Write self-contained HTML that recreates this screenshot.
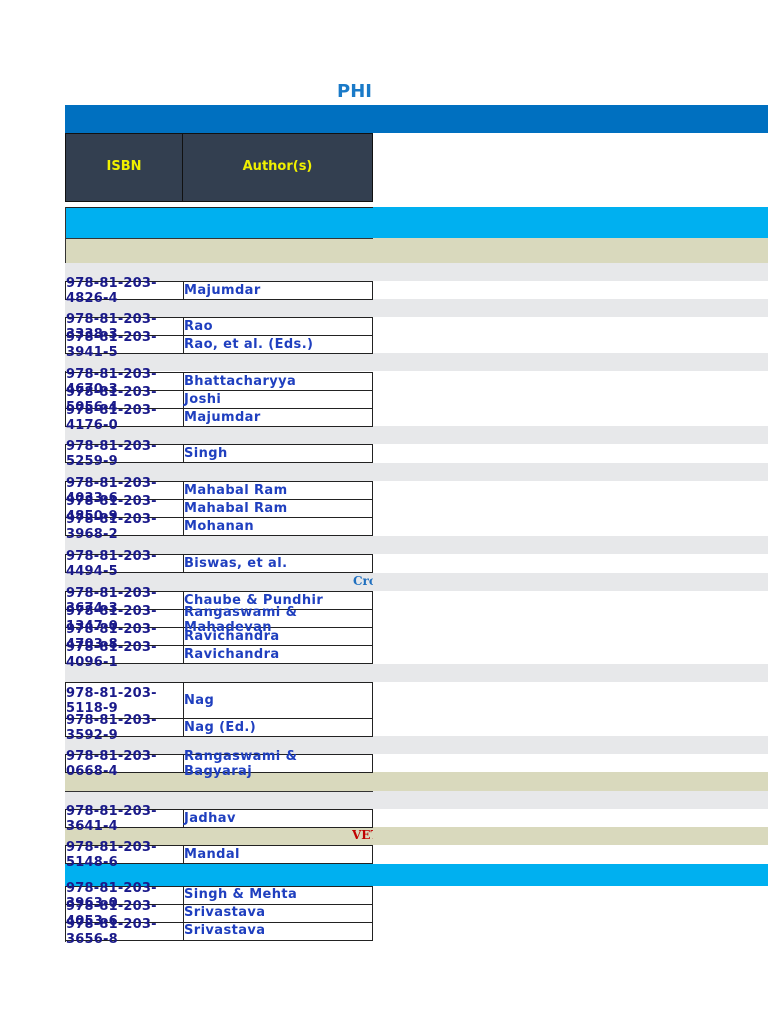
<!DOCTYPE html>
<html><head><meta charset="utf-8"><style>
body{margin:0;width:768px;height:1024px;background:#fff;position:relative;overflow:hidden;font-family:"DejaVu Sans","Liberation Sans",sans-serif}
div{position:absolute;box-sizing:border-box}
.g{left:65px;width:703px;height:18px;background:#e7e8ea}
.t{left:65px;width:703px;background:#d9d9bd}
.r{left:65px;width:308px;height:19px;border:1px solid #222;background:#fff}
.r .c{position:absolute;left:117px;top:-1px;bottom:-1px;border-left:1px solid #222}
.a{left:184px;width:190px;font-size:13px;font-weight:bold;letter-spacing:.4px;color:#1f3fbf;line-height:14px;z-index:3;white-space:nowrap}
.i{left:66px;font-size:13px;font-weight:bold;color:#1a1a8a;line-height:15px;letter-spacing:.2px;z-index:4;white-space:nowrap}
</style></head><body>
<div style="left:337px;top:81px;font-family:'DejaVu Sans';font-weight:bold;font-size:18px;color:#1a7ac8">PHI</div>
<div style="left:65px;top:105px;width:703px;height:28px;background:#0070c0"></div>
<div style="left:65px;top:133px;width:118px;height:69px;background:#333f50;border:1px solid #111;color:#f0f000;font:bold 13px 'DejaVu Sans';text-align:center;line-height:66px">ISBN</div>
<div style="left:183px;top:133px;width:190px;height:69px;background:#333f50;border:1px solid #111;border-left:none;color:#f0f000;font:bold 13px 'DejaVu Sans';text-align:center;line-height:66px">Author(s)</div>
<div style="left:65px;top:207px;width:703px;height:31px;background:#00b0f0"></div>
<div style="left:65px;top:207px;width:308px;height:57px;border:1px solid #222;border-right:none"></div>
<div class="t" style="top:238px;height:25px"></div>
<div style="left:65px;top:238px;width:308px;border-top:1px solid #333"></div>
<div style="left:65px;top:263px;width:308px;border-top:1px solid #333"></div>
<div style="left:65px;top:207px;height:735px;border-left:1px solid #333"></div>

<div class="g" style="top:263px"></div>
<div class="g" style="top:299px"></div>
<div class="g" style="top:353px"></div>
<div class="g" style="top:426px"></div>
<div class="g" style="top:463px"></div>
<div class="g" style="top:536px"></div>
<div class="g" style="top:573px"></div>
<div style="left:353px;top:574px;font:bold 12px 'DejaVu Serif',serif;color:#1f6fbf;width:20px;overflow:hidden;white-space:nowrap">Cro</div>
<div class="g" style="top:664px"></div>
<div class="g" style="top:736px"></div>
<div class="t" style="top:772px;height:19px"></div>
<div class="g" style="top:791px"></div>
<div class="t" style="top:827px;height:18px"></div>
<div style="left:352px;top:828px;font:bold 12px 'DejaVu Serif',serif;color:#c00000;width:21px;overflow:hidden;white-space:nowrap">VET</div>
<div style="left:65px;top:864px;width:703px;height:22px;background:#00b0f0"></div>

<div class="r" style="top:281px"><div class="c"></div></div>
<div class="r" style="top:317px"><div class="c"></div></div>
<div class="r" style="top:335px"><div class="c"></div></div>
<div class="r" style="top:372px"><div class="c"></div></div>
<div class="r" style="top:390px"><div class="c"></div></div>
<div class="r" style="top:408px"><div class="c"></div></div>
<div class="r" style="top:444px"><div class="c"></div></div>
<div class="r" style="top:481px"><div class="c"></div></div>
<div class="r" style="top:499px"><div class="c"></div></div>
<div class="r" style="top:517px"><div class="c"></div></div>
<div class="r" style="top:554px"><div class="c"></div></div>
<div class="r" style="top:591px"><div class="c"></div></div>
<div class="r" style="top:609px"><div class="c"></div></div>
<div class="r" style="top:627px"><div class="c"></div></div>
<div class="r" style="top:645px"><div class="c"></div></div>
<div class="r" style="top:682px;height:37px"><div class="c"></div></div>
<div class="r" style="top:718px"><div class="c"></div></div>
<div class="r" style="top:754px"><div class="c"></div></div>
<div style="left:65px;top:791px;width:308px;border-top:1px solid #333"></div>
<div class="r" style="top:809px"><div class="c"></div></div>
<div class="r" style="top:845px"><div class="c"></div></div>
<div class="r" style="top:886px"><div class="c"></div></div>
<div class="r" style="top:904px"><div class="c"></div></div>
<div class="r" style="top:922px"><div class="c"></div></div>

<div class="a" style="top:284px">Majumdar</div>
<div class="a" style="top:320px">Rao</div>
<div class="a" style="top:338px">Rao, et al. (Eds.)</div>
<div class="a" style="top:375px">Bhattacharyya</div>
<div class="a" style="top:393px">Joshi</div>
<div class="a" style="top:411px">Majumdar</div>
<div class="a" style="top:447px">Singh</div>
<div class="a" style="top:484px">Mahabal Ram</div>
<div class="a" style="top:502px">Mahabal Ram</div>
<div class="a" style="top:520px">Mohanan</div>
<div class="a" style="top:557px">Biswas, et al.</div>
<div class="a" style="top:594px">Chaube &amp; Pundhir</div>
<div class="a" style="top:605px;line-height:15px">Rangaswami &amp;<br>Mahadevan</div>
<div class="a" style="top:630px">Ravichandra</div>
<div class="a" style="top:648px">Ravichandra</div>
<div class="a" style="top:694px">Nag</div>
<div class="a" style="top:721px">Nag (Ed.)</div>
<div class="a" style="top:749px;line-height:15px">Rangaswami &amp;<br>Bagyaraj</div>
<div class="a" style="top:812px">Jadhav</div>
<div class="a" style="top:848px">Mandal</div>
<div class="a" style="top:888px">Singh &amp; Mehta</div>
<div class="a" style="top:906px">Srivastava</div>
<div class="a" style="top:924px">Srivastava</div>

<div class="i" style="top:276px">978-81-203-<br>4826-4</div>
<div class="i" style="top:312px">978-81-203-<br>3338-3</div>
<div class="i" style="top:330px">978-81-203-<br>3941-5</div>
<div class="i" style="top:367px">978-81-203-<br>4670-3</div>
<div class="i" style="top:385px">978-81-203-<br>5056-4</div>
<div class="i" style="top:403px">978-81-203-<br>4176-0</div>
<div class="i" style="top:439px">978-81-203-<br>5259-9</div>
<div class="i" style="top:476px">978-81-203-<br>4033-6</div>
<div class="i" style="top:494px">978-81-203-<br>4850-9</div>
<div class="i" style="top:512px">978-81-203-<br>3968-2</div>
<div class="i" style="top:549px">978-81-203-<br>4494-5</div>
<div class="i" style="top:586px">978-81-203-<br>3674-3</div>
<div class="i" style="top:604px">978-81-203-<br>1347-0</div>
<div class="i" style="top:622px">978-81-203-<br>4703-8</div>
<div class="i" style="top:640px">978-81-203-<br>4096-1</div>
<div class="i" style="top:686px">978-81-203-<br>5118-9</div>
<div class="i" style="top:713px">978-81-203-<br>3592-9</div>
<div class="i" style="top:749px">978-81-203-<br>0668-4</div>
<div class="i" style="top:804px">978-81-203-<br>3641-4</div>
<div class="i" style="top:840px">978-81-203-<br>5148-6</div>
<div class="i" style="top:881px">978-81-203-<br>3963-0</div>
<div class="i" style="top:899px">978-81-203-<br>4053-6</div>
<div class="i" style="top:917px">978-81-203-<br>3656-8</div>
</body></html>
